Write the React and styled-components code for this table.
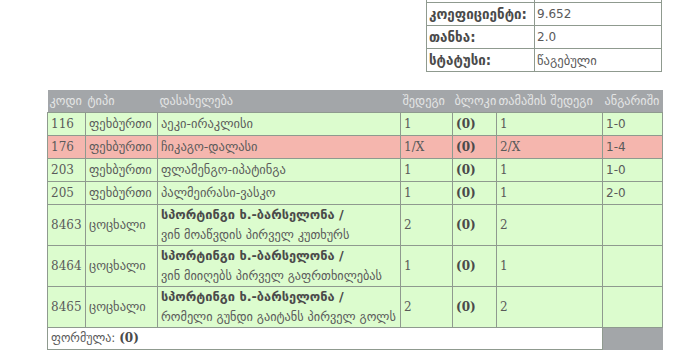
import React from 'react'
import styled, { createGlobalStyle } from 'styled-components'

const GlobalStyle = createGlobalStyle`
  html, body {
    margin: 0;
    padding: 0;
    background: #fff;
  }
`

const colors = {
  border: '#8f9a8f',
  text: '#5a5a5a',
  head: '#a3a6a9',
  headText: '#e4e5e5',
  green: '#dcfcce',
  red: '#f5b6ae',
}

const Page = styled.div`
  width: 615px;
  margin: -21px 0 0 47px;
  display: flex;
  flex-direction: column;
  gap: 18px;
  font-family: "DejaVu Sans", sans-serif;
  font-size: 12px;
  color: ${colors.text};
`

const InfoTable = styled.table`
  align-self: flex-end;
  width: 236px;
  border-collapse: collapse;
  table-layout: fixed;
`

const InfoRow = styled.tr`
  height: 23px;
`

const InfoLabel = styled.td`
  width: 103px;
  padding: 0 2px;
  border: 1px solid ${colors.border};
  font-weight: bold;
  font-size: 13.4px;
  color: #4a4a4a;
  white-space: nowrap;
  overflow: hidden;
`

const InfoValue = styled.td`
  padding: 0 2px;
  border: 1px solid ${colors.border};
  font-size: ${({ $georgian }) => ($georgian ? '12.6px' : '12px')};
  white-space: nowrap;
`

const BetTable = styled.table`
  width: 615px;
  border-collapse: collapse;
  table-layout: fixed;
  font-family: "DejaVu Serif", "DejaVu Sans", serif;
`

const HeadRow = styled.tr`
  background: ${colors.head};
  height: 22px;
`

const HeadCell = styled.th`
  padding: 0 1px 0 2px;
  font-weight: normal;
  font-size: 12.3px;
  text-align: left;
  color: ${colors.headText};
  font-family: "DejaVu Sans", sans-serif;
  white-space: nowrap;
  overflow: hidden;
`

const Row = styled.tr`
  background: ${({ $tone }) => ($tone === 'red' ? colors.red : colors.green)};
  height: ${({ $tall }) => ($tall ? '41px' : '23px')};
`

const Cell = styled.td`
  padding: 0 2px 0 3px;
  border: 1px solid ${colors.border};
  vertical-align: middle;
  white-space: nowrap;
  overflow: hidden;
  font-family: ${({ $georgian }) => ($georgian ? '"DejaVu Sans", sans-serif' : 'inherit')};
  font-size: ${({ $georgian }) => ($georgian ? '12.5px' : '12px')};
  font-weight: ${({ $bold }) => ($bold ? 'bold' : 'normal')};
  color: ${({ $bold }) => ($bold ? '#4a4a4a' : colors.text)};
`

const EventName = styled.div`
  line-height: 20px;
`

const Match = styled.span`
  display: block;
  font-weight: bold;
  font-size: 12.8px;
  color: #4a4a4a;
`

const Question = styled.span`
  display: block;
  font-size: 12.3px;
`

const Score = styled.span`
  font-family: "DejaVu Sans", sans-serif;
  font-size: 12px;
`

const FormulaCell = styled.td`
  height: 21px;
  padding: 0 3px;
  border: 1px solid ${colors.border};
  background: #fff;
  font-family: "DejaVu Sans", sans-serif;
  font-size: 12px;
  b {
    font-family: "DejaVu Serif", serif;
    color: #4a4a4a;
  }
`

const FillerCell = styled.td`
  background: ${colors.head};
  border-bottom: 1px solid ${colors.head};
`

const info = [
  ['', ''],
  ['კოეფიციენტი:', '9.652'],
  ['თანხა:', '2.0'],
  ['სტატუსი:', 'წაგებული', true],
]

const columns = [
  ['კოდი', 38],
  ['ტიპი', 72],
  ['დასახელება', 243],
  ['შედეგი', 52],
  ['ბლოკი', 44],
  ['თამაშის შედეგი', 106],
  ['ანგარიში', 60],
]

const match = 'სპორტინგი ხ.-ბარსელონა /'

const bets = [
  { code: '116', kind: 'ფეხბურთი', name: 'აეკი-ირაკლისი', pick: '1', result: '1', score: '1-0' },
  { code: '176', kind: 'ფეხბურთი', name: 'ჩიკაგო-დალასი', pick: '1/X', result: '2/X', score: '1-4', tone: 'red' },
  { code: '203', kind: 'ფეხბურთი', name: 'ფლამენგო-იპატინგა', pick: '1', result: '1', score: '1-0' },
  { code: '205', kind: 'ფეხბურთი', name: 'პალმეირასი-ვასკო', pick: '1', result: '1', score: '2-0' },
  { code: '8463', kind: 'ცოცხალი', match, name: 'ვინ მოაწვდის პირველ კუთხურს', pick: '2', result: '2', score: '' },
  { code: '8464', kind: 'ცოცხალი', match, name: 'ვინ მიიღებს პირველ გაფრთხილებას', pick: '1', result: '1', score: '' },
  { code: '8465', kind: 'ცოცხალი', match, name: 'რომელი გუნდი გაიტანს პირველ გოლს', pick: '2', result: '2', score: '' },
]

export default function App() {
  return (
    <>
      <GlobalStyle />
      <Page>
        <InfoTable>
          <tbody>
            {info.map(([label, value, georgian], i) => (
              <InfoRow key={i}>
                <InfoLabel>{label}</InfoLabel>
                <InfoValue $georgian={georgian}>{value}</InfoValue>
              </InfoRow>
            ))}
          </tbody>
        </InfoTable>

        <BetTable>
          <colgroup>
            {columns.map(([title, w]) => (
              <col key={title} style={{ width: w }} />
            ))}
          </colgroup>
          <thead>
            <HeadRow>
              {columns.map(([title]) => (
                <HeadCell key={title}>{title}</HeadCell>
              ))}
            </HeadRow>
          </thead>
          <tbody>
            {bets.map((b) => (
              <Row key={b.code} $tone={b.tone} $tall={!!b.match}>
                <Cell>{b.code}</Cell>
                <Cell $georgian>{b.kind}</Cell>
                <Cell $georgian>
                  {b.match ? (
                    <EventName>
                      <Match>{b.match}</Match>
                      <Question>{b.name}</Question>
                    </EventName>
                  ) : (
                    b.name
                  )}
                </Cell>
                <Cell>{b.pick}</Cell>
                <Cell $bold>(0)</Cell>
                <Cell>{b.result}</Cell>
                <Cell>
                  <Score>{b.score}</Score>
                </Cell>
              </Row>
            ))}
            <tr>
              <FormulaCell colSpan={6}>
                ფორმულა: <b>(0)</b>
              </FormulaCell>
              <FillerCell />
            </tr>
          </tbody>
        </BetTable>
      </Page>
    </>
  )
}
